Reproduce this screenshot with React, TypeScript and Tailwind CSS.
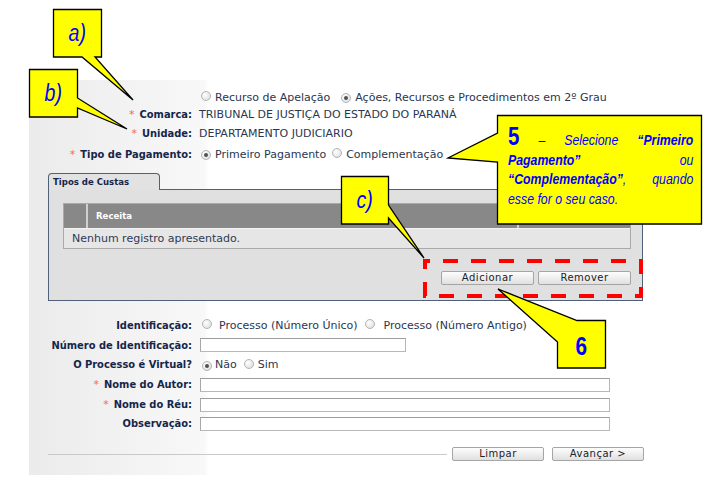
import React from "react";

const Radio = ({ checked = false }: { checked?: boolean }) => (
  <span className="inline-flex w-[10px] h-[10px] shrink-0 rounded-full border border-[#b3b3b3] bg-[radial-gradient(circle_at_35%_35%,#ffffff,#d9d9d9)] items-center justify-center">
    {checked && <span className="w-[4px] h-[4px] rounded-full bg-[#505050]" />}
  </span>
);

const labelCls =
  "font-bold text-[#15264a] font-['DejaVu_Sans_Condensed','DejaVu_Sans',sans-serif] font-stretch-condensed";

const Row = ({
  label,
  req,
  h,
  children,
}: {
  label?: string;
  req?: boolean;
  h: string;
  children?: React.ReactNode;
}) => (
  <div className={`flex items-center ${h}`}>
    <div className="w-[163px] shrink-0 text-right whitespace-nowrap">
      {req && <span className="text-[#f0703a] mr-[5px]">*</span>}
      {label && <span className={labelCls}>{label}</span>}
    </div>
    <div className="ml-[7px] flex items-center whitespace-nowrap text-[#2b3650]">
      {children}
    </div>
  </div>
);

const Btn = ({ children, w }: { children: React.ReactNode; w: string }) => (
  <div
    className={`${w} h-[14px] flex items-center justify-center border border-[#a5a5a5] rounded-[2px] bg-[linear-gradient(#fdfdfd,#e0e0e0)] text-[10px] tracking-[0.5px] text-[#222] leading-none`}
  >
    {children}
  </div>
);

const Input = ({ w }: { w: string }) => (
  <div className={`${w} h-[14px] ml-px border border-[#b8b8b8] border-t-[#9c9c9c] border-l-[#a8a8a8] bg-white`} />
);

const arial = "font-['Liberation_Sans',Arial,sans-serif]";

export default function App() {
  return (
    <div className="relative w-[722px] h-[503px] overflow-hidden bg-white text-[11px] leading-none font-['DejaVu_Sans',Verdana,sans-serif]">
      <div className="pt-[80px] pl-[29px]">
        <div className="h-[395px] pt-[9px] bg-[linear-gradient(to_right,#ebebeb,#f8f8f8_175px,#ffffff_180px)]">
          <Row h="h-[16px]">
            <span className="ml-[2px]"><Radio /></span>
            <span className="ml-[4px]">Recurso de Apelação</span>
            <span className="ml-[11px]"><Radio checked /></span>
            <span className="ml-[4px]">Ações, Recursos e Procedimentos em 2º Grau</span>
          </Row>
          <Row h="h-[18px]" req label="Comarca:">
            TRIBUNAL DE JUSTIÇA DO ESTADO DO PARANÁ
          </Row>
          <Row h="h-[20px]" req label="Unidade:">
            DEPARTAMENTO JUDICIARIO
          </Row>
          <Row h="h-[22px]" req label="Tipo de Pagamento:">
            <span className="ml-[2px]"><Radio checked /></span>
            <span className="ml-[4px]">Primeiro Pagamento</span>
            <span className="ml-[6px]"><Radio /></span>
            <span className="ml-[4px]">Complementação</span>
          </Row>

          {/* Tab panel */}
          <div className="ml-[19px] mt-[8px] w-[595px]">
            <div className="flex h-[17px]">
              <div className="w-[112px] h-[17px] border border-b-0 border-[#4f6078] rounded-t-[4px] bg-[#e2e2e2] flex items-center pl-[4px]">
                <span className={`${labelCls} text-[9.5px]`}>Tipos de Custas</span>
              </div>
              <div className="flex-1 border-b border-[#4f6078]" />
            </div>
            <div className="h-[111px] border border-t-0 border-[#4f6078] bg-[#e0e0e0] pt-[13px] pl-[14px] pr-[11px]">
              <div className="w-[568px] border border-[#a9a9a9]">
                <div className="flex h-[24px] bg-[#888888]">
                  <div className="w-[22px]" />
                  <div className="w-[2px] bg-[#cfcfcf]" />
                  <div className="w-[429px] flex items-center pl-[8px]">
                    <span className="font-bold text-white text-[9.5px] font-['DejaVu_Sans_Condensed','DejaVu_Sans',sans-serif] font-stretch-condensed">
                      Receita
                    </span>
                  </div>
                  <div className="w-[2px] bg-[#cfcfcf]" />
                  <div className="flex-1" />
                </div>
                <div className="h-[20px] bg-[#e6e6e6] border-t border-[#f4f4f4] flex items-center pl-[8px] text-[#2f3b55]">
                  Nenhum registro apresentado.
                </div>
              </div>
              <div className="mt-[22px] w-[568px] flex justify-end gap-[4px]">
                <Btn w="w-[93px]">Adicionar</Btn>
                <Btn w="w-[93px]">Remover</Btn>
              </div>
            </div>
          </div>

          {/* Lower form */}
          <div className="mt-[14px]">
            <Row h="h-[20px]" label="Identificação:">
              <span className="ml-[3px]"><Radio /></span>
              <span className="ml-[7px]">Processo (Número Único)</span>
              <span className="ml-[7px]"><Radio /></span>
              <span className="ml-[9px]">Processo (Número Antigo)</span>
            </Row>
            <Row h="h-[20px]" label="Número de Identificação:">
              <Input w="w-[206px]" />
            </Row>
            <Row h="h-[19px]" label="O Processo é Virtual?">
              <span className="ml-[3px]"><Radio checked /></span>
              <span className="ml-[3px]">Não</span>
              <span className="ml-[7px]"><Radio /></span>
              <span className="ml-[4px]">Sim</span>
            </Row>
            <Row h="h-[21px]" req label="Nome do Autor:">
              <Input w="w-[410px]" />
            </Row>
            <Row h="h-[19px]" req label="Nome do Réu:">
              <Input w="w-[410px]" />
            </Row>
            <Row h="h-[19px]" label="Observação:">
              <Input w="w-[410px]" />
            </Row>
          </div>

          <div className="mt-[13px] h-[16px] flex items-center">
            <div className="ml-[19px] w-[399px] h-px bg-[#c9c9c9]" />
            <div className="ml-[5px]">
              <Btn w="w-[92px]">Limpar</Btn>
            </div>
            <div className="ml-[8px]">
              <Btn w="w-[92px]">Avançar &gt;</Btn>
            </div>
          </div>
        </div>
      </div>

      {/* Annotation overlay */}
      <svg className="absolute left-0 top-0 pointer-events-none" width="722" height="503" viewBox="0 0 722 503">
        <rect x="425" y="261" width="216" height="35" fill="none" stroke="#ff0000" strokeWidth="4" strokeDasharray="15 13" strokeDashoffset="10" />
        <path d="M53.5,9.5 H101.5 V57 H95 L133,100 L82,57 H53.5 Z" fill="#ffff00" stroke="#000" strokeWidth="1.3" />
        <path d="M29.5,69.5 H77.5 V98 L127,129 L77.5,108 V117 H29.5 Z" fill="#ffff00" stroke="#000" strokeWidth="1.3" />
        <path d="M497.5,115.5 H701.5 V224 H497.5 V162 L448,158 L497.5,133 Z" fill="#ffff00" stroke="#000" strokeWidth="1.3" />
        <path d="M341.5,176.5 H388.5 V205 L424,258 L388.5,218 V224 H341.5 Z" fill="#ffff00" stroke="#000" strokeWidth="1.3" />
        <path d="M557.5,342 L498,289 L577,320.5 H605.5 V368 H557.5 Z" fill="#ffff00" stroke="#000" strokeWidth="1.3" />
      </svg>

      <div className={`absolute left-[53px] top-[9px] w-[49px] h-[48px] flex items-center justify-center italic text-[23px] text-[#0000ff] ${arial}`}>
        <span className="inline-block scale-x-[0.85]">a)</span>
      </div>
      <div className={`absolute left-[29px] top-[69px] w-[49px] h-[48px] flex items-center justify-center italic text-[23px] text-[#0000ff] ${arial}`}>
        <span className="inline-block scale-x-[0.85]">b)</span>
      </div>
      <div className={`absolute left-[341px] top-[176px] w-[48px] h-[48px] flex items-center justify-center italic text-[23px] text-[#0000ff] ${arial}`}>
        <span className="inline-block scale-x-[0.85]">c)</span>
      </div>
      <div className={`absolute left-[557px] top-[320px] w-[49px] h-[48px] flex items-center justify-center font-bold text-[26px] text-[#0000ff] ${arial}`}>
        <span className="inline-block scale-x-[0.8] mt-[3px]">6</span>
      </div>

      <div className={`absolute left-[508px] top-[130px] w-[226px] origin-top-left scale-x-[0.82] text-[15px] text-[#0000ff] ${arial}`}>
        <div className="flex justify-between items-baseline h-[19.5px] leading-[19.5px]">
          <span className="font-bold not-italic text-[25px] leading-[13px]">5</span>
          <span className="italic">–</span>
          <span className="italic">Selecione</span>
          <span className="italic font-bold">“Primeiro</span>
        </div>
        <div className="flex justify-between items-baseline h-[19.5px] leading-[19.5px]">
          <span className="italic font-bold">Pagamento”</span>
          <span className="italic">ou</span>
        </div>
        <div className="flex justify-between items-baseline h-[19.5px] leading-[19.5px]">
          <span className="italic">
            <span className="font-bold">“Complementação”</span>,
          </span>
          <span className="italic">quando</span>
        </div>
        <div className="flex items-baseline h-[19.5px] leading-[19.5px]">
          <span className="italic">esse for o seu caso.</span>
        </div>
      </div>
    </div>
  );
}
